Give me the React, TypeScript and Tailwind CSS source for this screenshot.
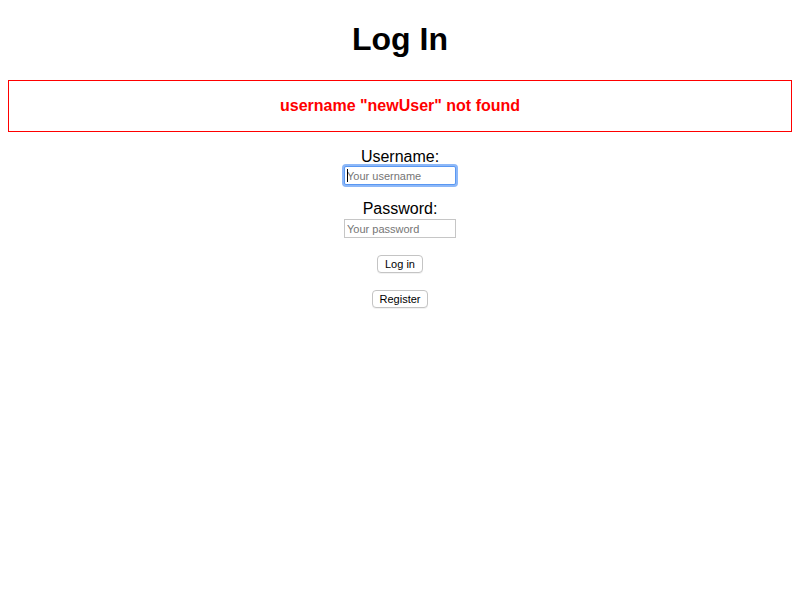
export default function App() {
  return (
    <div className="min-h-screen bg-white px-2 pt-[21px] font-['Liberation_Sans',Arial,sans-serif] text-black">
      <h1 className="h-[37px] text-center text-[32px] font-bold leading-[37px]">Log In</h1>

      <div className="mt-[22px] flex h-[52px] items-center justify-center border border-[#ff0000]">
        <p className="text-[16px] font-bold leading-[18px] text-[#ff0000]">
          username "newUser" not found
        </p>
      </div>

      <form className="flex flex-col items-center" onSubmit={(e) => e.preventDefault()}>
        <label className="mt-[16px] h-[18px] text-[16px] leading-[18px]">Username:</label>
        <div className="relative flex">
          <input
            type="text"
            placeholder="Your username"
            className="h-[19px] w-[112px] rounded-[2px] border border-[#5a98f2] bg-white px-[2px] text-[11px] leading-[13px] shadow-[0_0_0_2px_#8db8f8] outline-none placeholder:text-[#757575]"
          />
          <span className="absolute left-[3px] top-[3px] h-[13px] w-px bg-black" />
        </div>

        <label className="mt-[15px] h-[18px] text-[16px] leading-[18px]">Password:</label>
        <input
          type="password"
          placeholder="Your password"
          className="mt-px h-[19px] w-[112px] border border-[#c6c6c6] bg-white px-[2px] text-[11px] leading-[13px] outline-none placeholder:text-[#757575]"
        />

        <button
          type="submit"
          className="mt-[17px] h-[18px] rounded-[4px] border border-[#c4c4c4] bg-white px-[7px] text-[11px] leading-[14px] shadow-[0_1px_0_rgba(0,0,0,0.05)]"
        >
          Log in
        </button>
        <button
          type="button"
          className="mt-[17px] h-[18px] rounded-[4px] border border-[#c4c4c4] bg-white px-[7px] text-[11px] leading-[14px] shadow-[0_1px_0_rgba(0,0,0,0.05)]"
        >
          Register
        </button>
      </form>
    </div>
  );
}
